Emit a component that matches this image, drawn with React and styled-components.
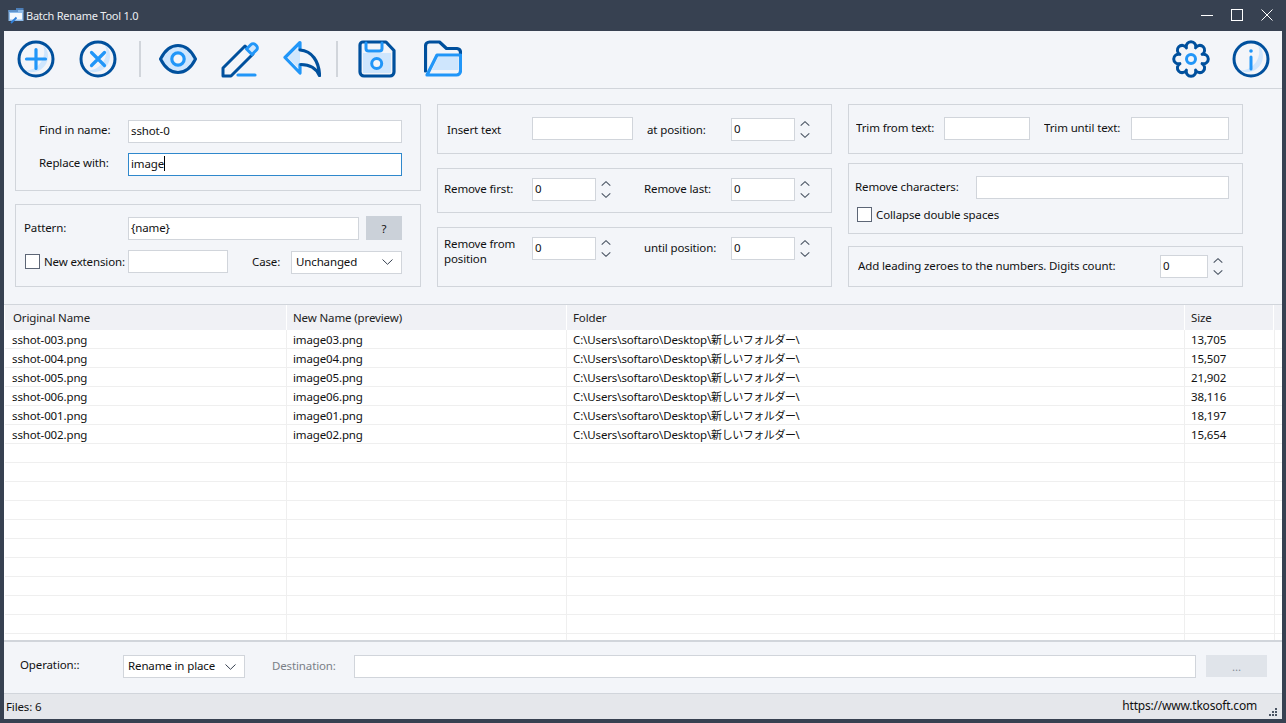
import styled, { createGlobalStyle } from 'styled-components';

const DARK = '#00509d';
const BLUE = '#2196f8';
const LIGHT = '#cfe6fd';

const GlobalStyle = createGlobalStyle`
  html, body {
    margin: 0;
    padding: 0;
    background: #374151;
  }
  body {
    font-family: "Noto Sans", "Noto Sans CJK JP", sans-serif;
    font-size: 11.5px;
    letter-spacing: -0.13px;
    color: #111;
    overflow: hidden;
  }
`;

const Win = styled.div`
  width: 1286px;
  height: 723px;
  background: #374151;
  display: flex;
  flex-direction: column;
  box-sizing: border-box;
  padding: 0 4px 4px;
`;

const TitleBar = styled.div`
  height: 31px;
  flex: none;
  display: flex;
  align-items: center;
  padding-left: 4px;
  color: #eceef1;
`;

const TitleText = styled.span`
  margin-left: 1px;
  font-size: 11px;
  letter-spacing: -0.25px;
`;

const WinButtons = styled.div`
  margin-left: auto;
  display: flex;
  align-items: center;
  gap: 18px;
  padding-right: 9px;
  margin-top: -1px;
`;

const Client = styled.div`
  flex: 1;
  min-height: 0;
  display: flex;
  flex-direction: column;
  background: #f3f5f9;
`;

const Toolbar = styled.div`
  height: 58px;
  flex: none;
  box-sizing: border-box;
  display: flex;
  align-items: center;
  padding: 0 12px 1px 13px;
  border-bottom: 1px solid #d1d5db;
`;

const ToolButton = styled.div`
  width: 38px;
  height: 38px;
  flex: none;
  margin-left: ${(p) => p.$ml || 0}px;
`;

const Sep = styled.div`
  width: 2px;
  height: 36px;
  flex: none;
  background: #d1d5db;
  margin-left: ${(p) => p.$ml}px;
`;

const Spacer = styled.div`
  flex: 1;
`;

const Options = styled.div`
  height: 216px;
  flex: none;
  box-sizing: border-box;
  display: grid;
  grid-template-columns: 406px 395px 395px;
  column-gap: 16px;
  padding: 15px 0 0 11px;
  border-bottom: 1px solid #d1d5db;
`;

const Column = styled.div`
  display: flex;
  flex-direction: column;
`;

const Group = styled.div`
  box-sizing: border-box;
  height: ${(p) => p.$h}px;
  margin-top: ${(p) => p.$mt || 0}px;
  padding: ${(p) => p.$top}px 0 0 ${(p) => p.$left}px;
  border: 1px solid #d1d5db;
  display: flex;
  flex-direction: column;
`;

const Row = styled.div`
  display: flex;
  align-items: ${(p) => p.$align || 'center'};
  height: 23px;
  flex: none;
  margin-top: ${(p) => p.$mt || 0}px;
`;

const Label = styled.div`
  width: ${(p) => p.$w}px;
  flex: none;
  margin-left: ${(p) => p.$ml || 0}px;
  margin-top: ${(p) => (p.$wrap ? -1 : p.$dy > 0 ? p.$dy * 2 : 0)}px;
  margin-bottom: ${(p) => (p.$dy < 0 ? p.$dy * -2 : 0)}px;
  padding-bottom: ${(p) => (p.$wrap ? 0 : 2)}px;
  line-height: 15px;
  white-space: ${(p) => (p.$wrap ? 'normal' : 'nowrap')};
  overflow: hidden;
  color: ${(p) => (p.$muted ? '#7a7f87' : 'inherit')};
  align-self: ${(p) => (p.$wrap ? 'flex-start' : 'auto')};
`;

const Field = styled.div`
  box-sizing: border-box;
  width: ${(p) => p.$w}px;
  height: 23px;
  flex: none;
  margin-left: ${(p) => p.$ml || 0}px;
  margin-top: ${(p) => p.$mt || 0}px;
  padding: 0 2px;
  line-height: 20px;
  background: #fff;
  white-space: nowrap;
  border: 1px solid ${(p) => (p.$focus ? '#2f88cc' : '#d1d5db')};
`;

const Caret = styled.span`
  display: inline-block;
  width: 1px;
  height: 15px;
  background: #000;
  vertical-align: -3px;
`;

const Spin = styled.div`
  width: 10px;
  flex: none;
  margin-left: 5px;
  margin-top: ${(p) => p.$mt || 0}px;
  display: flex;
  flex-direction: column;
  gap: 7px;
`;

const Arrow = styled.svg`
  display: block;
  width: 10px;
  height: 5px;
`;

const Check = styled.div`
  box-sizing: border-box;
  width: 15px;
  height: 15px;
  flex: none;
  margin-left: ${(p) => p.$ml || 0}px;
  margin-right: 4px;
  background: #fff;
  border: 1px solid #5d6676;
`;

const Help = styled.div`
  width: 36px;
  height: 24px;
  flex: none;
  margin: -1px 0 0 7px;
  background: #cbd1d9;
  display: flex;
  align-items: center;
  justify-content: center;
`;

const Select = styled.div`
  box-sizing: border-box;
  width: ${(p) => p.$w}px;
  height: 23px;
  flex: none;
  margin-top: ${(p) => p.$mt || 0}px;
  padding: 0 5px 2px 4px;
  background: #fff;
  border: 1px solid #d1d5db;
  display: flex;
  align-items: center;
  justify-content: space-between;
`;

const SelectArrow = styled.svg`
  width: 11px;
  height: 6px;
  margin: 2px 3px 0 0;
`;

const Table = styled.div`
  flex: 1;
  min-height: 0;
  overflow: hidden;
  background: #fff;
  padding-left: 1px;
  border-bottom: 2px solid #d1d5db;
`;

const TableRow = styled.div`
  display: grid;
  grid-template-columns: 282px 280px 618px 90px 1fr;
  height: 19px;
  box-sizing: border-box;
  border-bottom: 1px solid #efefef;
`;

const Cell = styled.div`
  padding-left: 6px;
  line-height: 19px;
  white-space: nowrap;
  overflow: hidden;
  border-right: 1px solid #efefef;
  &:first-child {
    padding-left: 7px;
  }
  &:last-child {
    border-right: 0;
  }
`;

const HeadRow = styled.div`
  display: grid;
  grid-template-columns: 282px 280px 618px 89px 1fr;
  height: 24px;
  margin-bottom: 1px;
`;

const HeadCell = styled.div`
  padding-left: 6px;
  line-height: 25px;
  background: #f0f1f5;
  color: #222;
  border-right: 1px solid #fff;
  &:first-child {
    padding-left: 8px;
  }
  &:last-child {
    border-right: 0;
  }
`;

const Jp = styled.span`
  font-size: 11px;
  letter-spacing: -0.45px;
`;

const BottomBar = styled.div`
  height: 52px;
  flex: none;
  box-sizing: border-box;
  padding: 13px 0 0 16px;
  border-bottom: 1px solid #d1d5db;
`;

const Browse = styled.div`
  width: 61px;
  height: 22px;
  flex: none;
  margin: -1px 0 0 10px;
  background: #e0e4ea;
  color: #8a8f98;
  display: flex;
  align-items: center;
  justify-content: center;
`;

const Status = styled.div`
  height: 25px;
  flex: none;
  position: relative;
  display: flex;
  align-items: center;
  justify-content: space-between;
  padding: 0 25px 0 2px;
  background: #e5e7eb;
`;

const Url = styled.span`
  font-size: 12px;
  letter-spacing: -0.2px;
  margin-bottom: 2px;
`;

const Grip = styled.svg`
  position: absolute;
  right: 5px;
  bottom: 3px;
  width: 8px;
  height: 8px;
`;

const lobes = (() => {
  const v = [];
  for (let i = 0; i < 8; i++) {
    const a = ((i + 0.5) * Math.PI) / 4;
    v.push([19 + 12 * Math.cos(a), 19 + 12 * Math.sin(a)]);
  }
  return (
    `M${v[7][0].toFixed(2)} ${v[7][1].toFixed(2)}` +
    v.map((p) => `A4.8 4.8 0 1 1 ${p[0].toFixed(2)} ${p[1].toFixed(2)}`).join('') +
    'Z'
  );
})();

const Icon = ({ children }) => (
  <svg width="38" height="38" viewBox="0 0 38 38" fill="none" strokeLinecap="round" strokeLinejoin="round" strokeWidth="3">
    {children}
  </svg>
);

const Ring = () => (
  <>
    <path d="M26 4.500A16 16 0 0 1 8 30.500A19 19 0 0 0 26 4.500Z" fill={LIGHT} />
    <circle cx="19" cy="19" r="17" stroke={DARK} />
  </>
);

const AddIcon = () => (
  <Icon>
    <Ring />
    <path d="M19 9.500V28.500M9.500 19H28.500" stroke={BLUE} strokeWidth="3.200" />
  </Icon>
);

const RemoveIcon = () => (
  <Icon>
    <Ring />
    <path d="M12.500 12.500L25.500 25.500M25.500 12.500L12.500 25.500" stroke={BLUE} strokeWidth="3.200" />
  </Icon>
);

const EyeIcon = () => (
  <Icon>
    <path
      d="M1.500 19C6 10 12 5.500 19 5.500C26 5.500 32 10 36.500 19C32 28 26 32.500 19 32.500C12 32.500 6 28 1.500 19Z"
      fill={LIGHT}
      stroke={DARK}
    />
    <circle cx="19" cy="19" r="6.200" fill="#f3f5f9" stroke={BLUE} strokeWidth="3.200" />
  </Icon>
);

const EditIcon = () => (
  <Icon>
    <path d="M2 36V28L24 6L32 14L10 36Z" fill="#f3f5f9" stroke={DARK} />
    <path d="M25.500 9L30 4.500A3 3 0 0 1 34.200 4.500L35.500 5.800A3 3 0 0 1 35.500 10L31 14.500Z" fill={LIGHT} stroke={BLUE} />
    <path d="M17 35H34" stroke={BLUE} strokeWidth="3.200" />
  </Icon>
);

const UndoIcon = () => (
  <Icon>
    <path d="M17 6L5 17.500L17 29.500Z" fill={LIGHT} />
    <path d="M17 9V2.500L2 17.500L17 33V24.500" stroke={BLUE} strokeWidth="3.200" />
    <path d="M17 10C29 11 36 21 36.500 35.500C33 28 27 24.500 18 24.500" stroke={DARK} strokeWidth="3.200" />
  </Icon>
);

const SaveIcon = () => (
  <Icon>
    <path d="M5 13H33V33H5Z" fill={LIGHT} />
    <path d="M5 2H28L36 10.500V32A4 4 0 0 1 32 36H6A4 4 0 0 1 2 32V5A3 3 0 0 1 5 2Z" stroke={DARK} strokeWidth="3.200" />
    <path d="M8 3V8.500A2.500 2.500 0 0 0 10.500 11H21.500A2.500 2.500 0 0 0 24 8.500V3" stroke={BLUE} strokeWidth="3" />
    <circle cx="18.700" cy="23.500" r="5" fill="#f3f5f9" stroke={BLUE} strokeWidth="3" />
  </Icon>
);

const FolderIcon = () => (
  <Icon>
    <path d="M14 17H34V30H8Z" fill={LIGHT} />
    <path d="M1.500 31V6A4 4 0 0 1 5.500 2H15.500L22.500 8.500H33A4 4 0 0 1 36.500 12.500V15" stroke={DARK} strokeWidth="3.200" />
    <path d="M3 35L13 15H36.500V31A4 4 0 0 1 32.500 35Z" stroke={BLUE} strokeWidth="3.200" />
  </Icon>
);

const GearIcon = () => (
  <Icon>
    <path d={lobes} stroke={DARK} />
    <circle cx="19" cy="19" r="4.500" stroke={BLUE} strokeWidth="3" />
  </Icon>
);

const InfoIcon = () => (
  <Icon>
    <Ring />
    <path d="M19 17V29" stroke={BLUE} strokeWidth="3" />
    <circle cx="19" cy="11" r="1.800" fill={BLUE} />
  </Icon>
);

const AppIcon = () => (
  <svg width="17" height="17" viewBox="0 0 17 17">
    <path d="M8 1H15.500V5H8Z" fill="#4d7fb8" />
    <path d="M0.500 3H15.500V14H0.500Z" fill="#8fbcea" />
    <path d="M0.500 3H10V5H0.500Z" fill="#5f93cc" />
    <path d="M2 6H14V12.500H2Z" fill="#f4f9fe" />
    <path d="M3 16L8.500 10.500" stroke="#2f7fd8" strokeWidth="1.800" />
  </svg>
);

const UpArrow = () => (
  <Arrow viewBox="0 0 10 5">
    <path d="M0.700 4.600L5 0.700L9.300 4.600" fill="none" stroke="#4b5563" strokeWidth="1.100" />
  </Arrow>
);

const DownArrow = () => (
  <Arrow viewBox="0 0 10 5">
    <path d="M0.700 0.400L5 4.300L9.300 0.400" fill="none" stroke="#4b5563" strokeWidth="1.100" />
  </Arrow>
);

const Spinner = ({ mt }) => (
  <Spin $mt={mt}>
    <UpArrow />
    <DownArrow />
  </Spin>
);

const Combo = ({ w, mt, children }) => (
  <Select $w={w} $mt={mt}>
    {children}
    <SelectArrow viewBox="0 0 11 6">
      <path d="M0.500 0.500L5.500 5.300L10.500 0.500" fill="none" stroke="#374151" />
    </SelectArrow>
  </Select>
);

const FOLDER = 'C:\\Users\\softaro\\Desktop\\';

const files = [
  ['sshot-003.png', 'image03.png', '13,705'],
  ['sshot-004.png', 'image04.png', '15,507'],
  ['sshot-005.png', 'image05.png', '21,902'],
  ['sshot-006.png', 'image06.png', '38,116'],
  ['sshot-001.png', 'image01.png', '18,197'],
  ['sshot-002.png', 'image02.png', '15,654'],
];

const emptyRows = Array.from({ length: 11 }, (_, i) => i);

const App = () => {
  return (
    <Win>
      <GlobalStyle />
      <TitleBar>
        <AppIcon />
        <TitleText>Batch Rename Tool 1.0</TitleText>
        <WinButtons>
          <svg width="12" height="12" viewBox="0 0 12 12">
            <path d="M0 6.500H12" stroke="#fff" />
          </svg>
          <svg width="12" height="12" viewBox="0 0 12 12">
            <rect x="0.500" y="0.500" width="11" height="11" fill="none" stroke="#fff" />
          </svg>
          <svg width="12" height="12" viewBox="0 0 12 12">
            <path d="M0.500 0.500L11.500 11.500M11.500 0.500L0.500 11.500" stroke="#fff" />
          </svg>
        </WinButtons>
      </TitleBar>

      <Client>
        <Toolbar>
          <ToolButton><AddIcon /></ToolButton>
          <ToolButton $ml={24}><RemoveIcon /></ToolButton>
          <Sep $ml={22} />
          <ToolButton $ml={18}><EyeIcon /></ToolButton>
          <ToolButton $ml={24}><EditIcon /></ToolButton>
          <ToolButton $ml={24}><UndoIcon /></ToolButton>
          <Sep $ml={15} />
          <ToolButton $ml={20}><SaveIcon /></ToolButton>
          <ToolButton $ml={28}><FolderIcon /></ToolButton>
          <Spacer />
          <ToolButton><GearIcon /></ToolButton>
          <ToolButton $ml={22}><InfoIcon /></ToolButton>
        </Toolbar>

        <Options>
          <Column>
            <Group $h={87} $top={15} $left={23}>
              <Row>
                <Label $w={89} $dy={-1}>Find in name:</Label>
                <Field $w={274}>sshot-0</Field>
              </Row>
              <Row $mt={10}>
                <Label $w={89} $dy={-1}>Replace with:</Label>
                <Field $w={274} $focus>image<Caret /></Field>
              </Row>
            </Group>
            <Group $h={83} $mt={13} $top={12} $left={8}>
              <Row>
                <Label $w={104}>Pattern:</Label>
                <Field $w={231}>{'{name}'}</Field>
                <Help>?</Help>
              </Row>
              <Row $mt={10}>
                <Check $ml={1} />
                <Label $w={84} $dy={1}>New extension:</Label>
                <Field $w={100} />
                <Label $w={39} $ml={24} $dy={1}>Case:</Label>
                <Combo w={111} mt={1}>Unchanged</Combo>
              </Row>
            </Group>
          </Column>

          <Column>
            <Group $h={50} $top={12} $left={9}>
              <Row>
                <Label $w={85} $dy={2}>Insert text</Label>
                <Field $w={101} />
                <Label $w={84} $ml={14} $dy={2}>at position:</Label>
                <Field $w={64} $mt={1}>0</Field>
                <Spinner mt={1} />
              </Row>
            </Group>
            <Group $h={45} $mt={14} $top={9} $left={6}>
              <Row>
                <Label $w={88}>Remove first:</Label>
                <Field $w={64}>0</Field>
                <Spinner />
                <Label $w={87} $ml={33}>Remove last:</Label>
                <Field $w={64}>0</Field>
                <Spinner />
              </Row>
            </Group>
            <Group $h={60} $mt={14} $top={9} $left={6}>
              <Row>
                <Label $w={88} $wrap>Remove from position</Label>
                <Field $w={64}>0</Field>
                <Spinner />
                <Label $w={87} $ml={33}>until position:</Label>
                <Field $w={64}>0</Field>
                <Spinner />
              </Row>
            </Group>
          </Column>

          <Column>
            <Group $h={50} $top={12} $left={7}>
              <Row>
                <Label $w={88}>Trim from text:</Label>
                <Field $w={86} />
                <Label $w={87} $ml={14}>Trim until text:</Label>
                <Field $w={98} />
              </Row>
            </Group>
            <Group $h={71} $mt={9} $top={12} $left={6}>
              <Row>
                <Label $w={121}>Remove characters:</Label>
                <Field $w={253} />
              </Row>
              <Row $mt={8} $align="flex-start">
                <Check $ml={2} />
                <Label $w={200}>Collapse double spaces</Label>
              </Row>
            </Group>
            <Group $h={41} $mt={12} $top={8} $left={9}>
              <Row>
                <Label $w={302}>Add leading zeroes to the numbers. Digits count:</Label>
                <Field $w={48}>0</Field>
                <Spinner />
              </Row>
            </Group>
          </Column>
        </Options>

        <Table>
          <HeadRow>
            <HeadCell>Original Name</HeadCell>
            <HeadCell>New Name (preview)</HeadCell>
            <HeadCell>Folder</HeadCell>
            <HeadCell>Size</HeadCell>
            <HeadCell />
          </HeadRow>
          {files.map((f) => (
            <TableRow key={f[0]}>
              <Cell>{f[0]}</Cell>
              <Cell>{f[1]}</Cell>
              <Cell>{FOLDER}<Jp>新しいフォルダー\</Jp></Cell>
              <Cell>{f[2]}</Cell>
              <Cell />
            </TableRow>
          ))}
          {emptyRows.map((i) => (
            <TableRow key={i}>
              <Cell />
              <Cell />
              <Cell />
              <Cell />
              <Cell />
            </TableRow>
          ))}
        </Table>

        <BottomBar>
          <Row>
            <Label $w={103} $dy={-1}>Operation::</Label>
            <Combo w={122}>Rename in place</Combo>
            <Label $w={82} $ml={27} $muted>Destination:</Label>
            <Field $w={842} />
            <Browse>...</Browse>
          </Row>
        </BottomBar>

        <Status>
          <span>Files: 6</span>
          <Url>https://www.tkosoft.com</Url>
          <Grip viewBox="0 0 8 8">
            <path d="M6 0h2v2H6zM3 3h2v2H3zM6 3h2v2H6zM0 6h2v2H0zM3 6h2v2H3zM6 6h2v2H6z" fill="#4b5563" />
          </Grip>
        </Status>
      </Client>
    </Win>
  );
};

export default App;
